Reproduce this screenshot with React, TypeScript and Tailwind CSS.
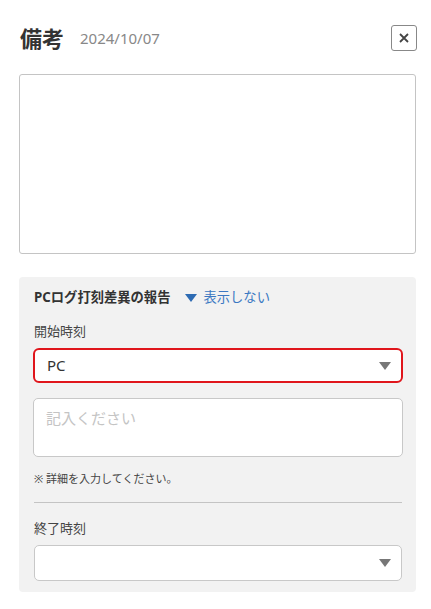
import React from "react";

const font = { fontFamily: '"Noto Sans", "Noto Sans CJK JP", sans-serif' };

function Caret({ color }: { color: string }) {
  return (
    <svg width="12" height="8" viewBox="0 0 12 8">
      <path d="M0 0 H12 L6 8 Z" fill={color} />
    </svg>
  );
}

export default function App() {
  return (
    <div className="w-[431px] h-[609px] bg-white pl-[19px] pr-[15px] pt-[25px]" style={font}>
      <div className="flex items-center justify-between h-[26px]">
        <div className="flex items-center">
          <span className="ml-[1px] text-[22px] font-bold text-[#333] leading-none">備考</span>
          <span className="ml-[16px] text-[15px] text-[#888] leading-none">2024/10/07</span>
        </div>
        <button className="w-[26px] h-[26px] border border-[#888] rounded-[3px] flex items-center justify-center mr-[-1px]">
          <svg width="10" height="10" viewBox="0 0 10 10">
            <path d="M1 1 L9 9 M9 1 L1 9" stroke="#444" strokeWidth="1.8" />
          </svg>
        </button>
      </div>
      <div className="mt-[23px] h-[180px] border border-[#c4c4c4] rounded-[3px]" />
      <div className="mt-[23px] bg-[#f2f2f2] rounded-[4px] pl-[15px] pr-[14px] pt-[11px] pb-[11px]">
        <div className="flex items-center h-[20px]">
          <span className="text-[13.3px] font-bold text-[#333]">PCログ打刻差異の報告</span>
          <span className="ml-[15px] flex items-center">
            <Caret color="#2d6bb3" />
          </span>
          <span className="ml-[6px] text-[13.3px] text-[#3b78c2]">表示しない</span>
        </div>
        <div className="mt-[13px] h-[20px] text-[13px] text-[#444] leading-[20px]">開始時刻</div>
        <div className="mt-[7px] -mx-[1px] h-[35px] bg-white border-2 border-[#e0161c] rounded-[6px] flex items-center justify-between pl-[12px] pr-[10px]">
          <span className="text-[15px] text-[#333]">PC</span>
          <Caret color="#777" />
        </div>
        <div className="mt-[15px] -mx-[1px] h-[59px] bg-white border border-[#c8c8c8] rounded-[5px] px-[12px] pt-[7px]">
          <span className="text-[15px] text-[#c4c4c4]">記入ください</span>
        </div>
        <div className="mt-[14px] h-[16px] text-[11px] text-[#444] leading-[16px]">※ 詳細を入力してください。</div>
        <div className="mt-[15px] h-px bg-[#c4c4c4]" />
        <div className="mt-[15px] h-[20px] text-[13px] text-[#444] leading-[20px]">終了時刻</div>
        <div className="mt-[7px] h-[36px] bg-white border border-[#c8c8c8] rounded-[5px] flex items-center justify-end pr-[10px]">
          <Caret color="#777" />
        </div>
      </div>
    </div>
  );
}
